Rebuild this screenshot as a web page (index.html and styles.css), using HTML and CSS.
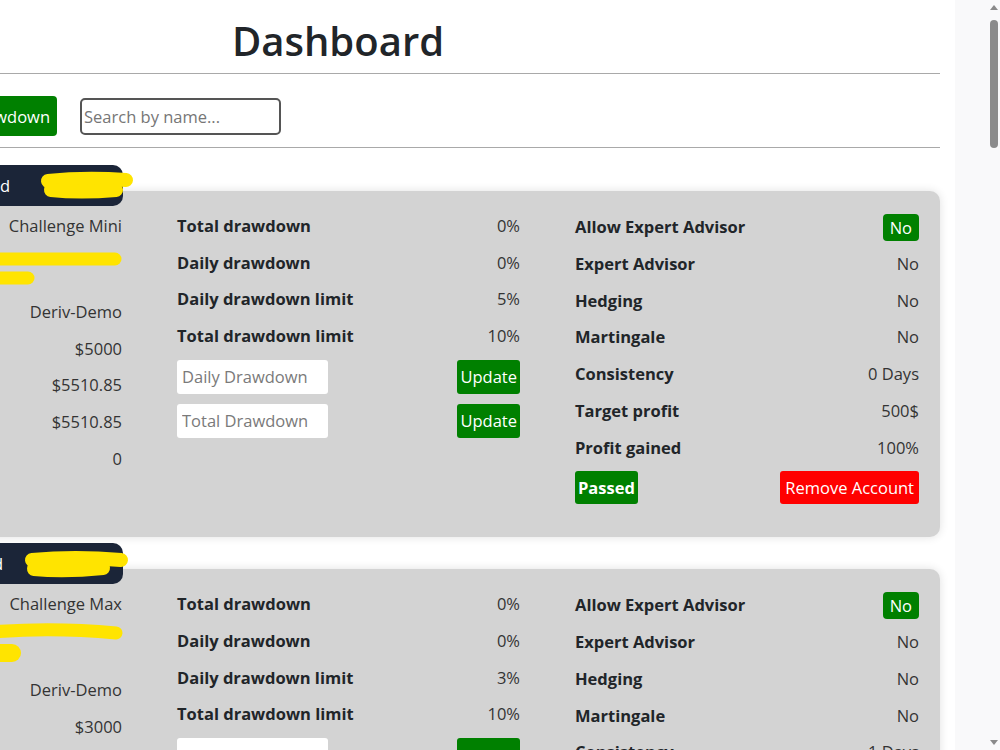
FILE: index.html
```html
<!DOCTYPE html>
<html>
<head>
    <link rel="stylesheet" href="styles.css">
</head>
<body>
    <div class="page">
        <div class="viewport">
            <div class="content">
                <h1 class="title">Dashboard</h1>
                <hr>
                <div class="toolbar">
                    <div class="toolbar-left">
                        <button class="btn sort-btn">Sort by drawdown</button>
                    </div>
                    <input class="search" type="text" placeholder="Search by name...">
                </div>
                <hr>

                <div class="accounts">
                    <!-- Account 1 -->
                    <div class="account">
                        <div class="account-tab">
                            <span>Account Id</span>
                            <span class="tab-mark">
                                <svg width="93" height="26" viewBox="0 0 93 26"><path d="M8 8 Q45 4 86 7" /><path d="M11 17 Q40 20 76 17" /></svg>
                            </span>
                        </div>
                        <div class="account-card">
                            <div class="col">
                                <div class="row"><span class="label">Type</span><span class="value">Challenge Mini</span></div>
                                <div class="row row-tall">
                                    <span class="label">Login</span>
                                    <svg class="mark" width="130" height="49" viewBox="0 0 130 49"><path d="M0 14 L123 14" /><path d="M0 33 L36 33" /></svg>
                                </div>
                                <div class="row"><span class="label">Server</span><span class="value">Deriv-Demo</span></div>
                                <div class="row"><span class="label">Initial balance</span><span class="value">$5000</span></div>
                                <div class="row"><span class="label">Balance</span><span class="value">$5510.85</span></div>
                                <div class="row"><span class="label">Equity</span><span class="value">$5510.85</span></div>
                                <div class="row"><span class="label">Open trades</span><span class="value">0</span></div>
                            </div>
                            <div class="col">
                                <div class="row"><span class="label">Total drawdown</span><span class="value">0%</span></div>
                                <div class="row"><span class="label">Daily drawdown</span><span class="value">0%</span></div>
                                <div class="row"><span class="label">Daily drawdown limit</span><span class="value">5%</span></div>
                                <div class="row"><span class="label">Total drawdown limit</span><span class="value">10%</span></div>
                                <div class="row row-input">
                                    <input class="limit-input" type="text" placeholder="Daily Drawdown">
                                    <button class="btn update-btn">Update</button>
                                </div>
                                <div class="row row-input">
                                    <input class="limit-input" type="text" placeholder="Total Drawdown">
                                    <button class="btn update-btn">Update</button>
                                </div>
                            </div>
                            <div class="col">
                                <div class="row row-badge"><span class="label">Allow Expert Advisor</span><span class="badge">No</span></div>
                                <div class="row"><span class="label">Expert Advisor</span><span class="value">No</span></div>
                                <div class="row"><span class="label">Hedging</span><span class="value">No</span></div>
                                <div class="row"><span class="label">Martingale</span><span class="value">No</span></div>
                                <div class="row"><span class="label">Consistency</span><span class="value">0 Days</span></div>
                                <div class="row"><span class="label">Target profit</span><span class="value">500$</span></div>
                                <div class="row"><span class="label">Profit gained</span><span class="value">100%</span></div>
                                <div class="row row-input">
                                    <span class="status">Passed</span>
                                    <button class="btn remove-btn">Remove Account</button>
                                </div>
                            </div>
                        </div>
                    </div>

                    <!-- Account 2 -->
                    <div class="account">
                        <div class="account-tab">
                            <span>Account Id</span>
                            <span class="tab-mark tab-mark-wide">
                                <svg width="103" height="26" viewBox="0 0 103 26"><path d="M7 9 Q50 5 96 9" /><path d="M9 18 Q40 21 78 17" /></svg>
                            </span>
                        </div>
                        <div class="account-card">
                            <div class="col">
                                <div class="row"><span class="label">Type</span><span class="value">Challenge Max</span></div>
                                <div class="row row-tall">
                                    <span class="label">Login</span>
                                    <svg class="mark" width="130" height="49" viewBox="0 0 130 49"><path d="M0 9 Q60 4 124 10" /><path d="M0 30 L20 30" class="thick" /></svg>
                                </div>
                                <div class="row"><span class="label">Server</span><span class="value">Deriv-Demo</span></div>
                                <div class="row"><span class="label">Initial balance</span><span class="value">$3000</span></div>
                                <div class="row"><span class="label">Balance</span><span class="value">$3000</span></div>
                                <div class="row"><span class="label">Equity</span><span class="value">$3000</span></div>
                                <div class="row"><span class="label">Open trades</span><span class="value">0</span></div>
                            </div>
                            <div class="col">
                                <div class="row"><span class="label">Total drawdown</span><span class="value">0%</span></div>
                                <div class="row"><span class="label">Daily drawdown</span><span class="value">0%</span></div>
                                <div class="row"><span class="label">Daily drawdown limit</span><span class="value">3%</span></div>
                                <div class="row"><span class="label">Total drawdown limit</span><span class="value">10%</span></div>
                                <div class="row row-input">
                                    <input class="limit-input" type="text" placeholder="Daily Drawdown">
                                    <button class="btn update-btn">Update</button>
                                </div>
                                <div class="row row-input">
                                    <input class="limit-input" type="text" placeholder="Total Drawdown">
                                    <button class="btn update-btn">Update</button>
                                </div>
                            </div>
                            <div class="col">
                                <div class="row row-badge"><span class="label">Allow Expert Advisor</span><span class="badge">No</span></div>
                                <div class="row"><span class="label">Expert Advisor</span><span class="value">No</span></div>
                                <div class="row"><span class="label">Hedging</span><span class="value">No</span></div>
                                <div class="row"><span class="label">Martingale</span><span class="value">No</span></div>
                                <div class="row"><span class="label">Consistency</span><span class="value">1 Days</span></div>
                                <div class="row"><span class="label">Target profit</span><span class="value">300$</span></div>
                                <div class="row"><span class="label">Profit gained</span><span class="value">0%</span></div>
                                <div class="row row-input">
                                    <span class="status">Passed</span>
                                    <button class="btn remove-btn">Remove Account</button>
                                </div>
                            </div>
                        </div>
                    </div>
                </div>
            </div>
        </div>

        <!-- fake browser scrollbar -->
        <div class="gutter">
            <div class="scrollbar">
                <div class="arrow-up"></div>
                <div class="thumb"></div>
                <div class="arrow-down"></div>
            </div>
        </div>
    </div>
</body>
</html>
```

FILE: styles.css
```css
body {
    margin: 0;
    font-family: "Open Sans", "Noto Sans", sans-serif;
    font-size: 16.5px;
    color: #212529;
    overflow: hidden;
}

.page {
    display: flex;
    height: 100vh;
}

.viewport {
    width: 955px;
    flex-shrink: 0;
    overflow: hidden;
    background: #fff;
}

/* page is scrolled sideways, so the content starts off-screen */
.content {
    margin-left: -264px;
    width: 1204px;
}

.title {
    margin: 14px 0 6px;
    text-align: center;
    font-size: 40px;
    font-weight: 600;
    line-height: 53px;
}

hr {
    margin: 0;
    border: 0;
    border-top: 1px solid #a9a9a9;
}

.toolbar {
    display: grid;
    grid-template-columns: 321px 201px;
    column-gap: 23px;
    align-items: center;
    padding: 22px 0 11px;
}

.toolbar-left {
    display: flex;
    justify-content: flex-end;
}

.btn {
    background: #008000;
    color: #fff;
    border: none;
    border-radius: 4px;
    font-family: inherit;
    cursor: pointer;
}

.sort-btn {
    height: 40px;
    padding: 0 7px 0 12px;
    font-size: 16.5px;
}

.search {
    height: 37px;
    box-sizing: border-box;
    border: 2px solid #555;
    border-radius: 5px;
    padding: 0 2px;
    font-family: inherit;
    font-size: 16.5px;
}

.search::placeholder {
    color: #767676;
}

/* Accounts */
.accounts {
    padding-top: 17px;
}

.account + .account {
    margin-top: 6px;
}

.account-tab {
    position: relative;
    z-index: 1;
    width: 387px;
    height: 41px;
    margin-bottom: -15px;
    box-sizing: border-box;
    display: flex;
    justify-content: flex-end;
    align-items: center;
    background: #1b2538;
    color: #fff;
    border-radius: 10px;
}

.tab-mark {
    width: 113px;
    height: 26px;
    padding-left: 30px;
    box-sizing: border-box;
}

.tab-mark-wide {
    width: 120px;
    padding-left: 22px;
}

.tab-mark svg,
.mark {
    overflow: visible;
}

.tab-mark path,
.mark path {
    fill: none;
    stroke: #ffe400;
    stroke-width: 14;
    stroke-linecap: round;
}

.mark path {
    stroke-width: 13;
}

.mark path.thick {
    stroke-width: 18;
}

.account-card {
    display: grid;
    grid-template-columns: 364px 343px 344px;
    column-gap: 55px;
    padding: 17px 22px 28px;
    background: #d3d3d3;
    border-radius: 10px;
    box-shadow: 0 0 10px rgba(0, 0, 0, 0.12);
}

.row {
    display: flex;
    justify-content: space-between;
    align-items: center;
    padding: 6px 0;
    line-height: 24.7px;
}

.row-tall {
    height: 49.3px;
    padding: 0;
    align-items: flex-start;
}

.row-badge {
    padding: 5.5px 0;
}

.row-input {
    padding: 5px 0;
}

.label {
    font-weight: 700;
    color: #212529;
}

.value {
    color: #333;
}

.badge {
    background: #008000;
    color: #fff;
    border-radius: 4px;
    padding: 0 7px;
    height: 27px;
    line-height: 27px;
}

.limit-input {
    width: 151px;
    height: 34px;
    box-sizing: border-box;
    border: none;
    border-radius: 3px;
    padding: 0 5px;
    font-family: inherit;
    font-size: 16.5px;
    background: #fff;
}

.limit-input::placeholder {
    color: #7a7a7a;
}

.update-btn {
    height: 34px;
    padding: 0 3px;
    font-size: 16.5px;
    border-radius: 3px;
}

.status {
    background: #008000;
    color: #fff;
    font-weight: 700;
    height: 33px;
    line-height: 33px;
    padding: 0 3px;
    border-radius: 3px;
}

.remove-btn {
    background: #ff0000;
    height: 33px;
    padding: 0 5px;
    font-size: 16.5px;
    border-radius: 3px;
}

/* Scrollbar */
.gutter {
    flex: 1;
    background: #f9f9fa;
    display: flex;
    justify-content: flex-end;
}

.scrollbar {
    width: 12px;
    display: flex;
    flex-direction: column;
    align-items: center;
    padding: 5px 0;
    box-sizing: border-box;
}

.arrow-up,
.arrow-down {
    width: 0;
    height: 0;
    border-left: 4px solid transparent;
    border-right: 4px solid transparent;
}

.arrow-up {
    border-bottom: 5px solid #8a8a8a;
}

.arrow-down {
    margin-top: auto;
    border-top: 5px solid #8a8a8a;
}

.thumb {
    width: 8px;
    height: 128px;
    margin-top: 10px;
    background: #8b8b8b;
    border-radius: 4px;
}
```
